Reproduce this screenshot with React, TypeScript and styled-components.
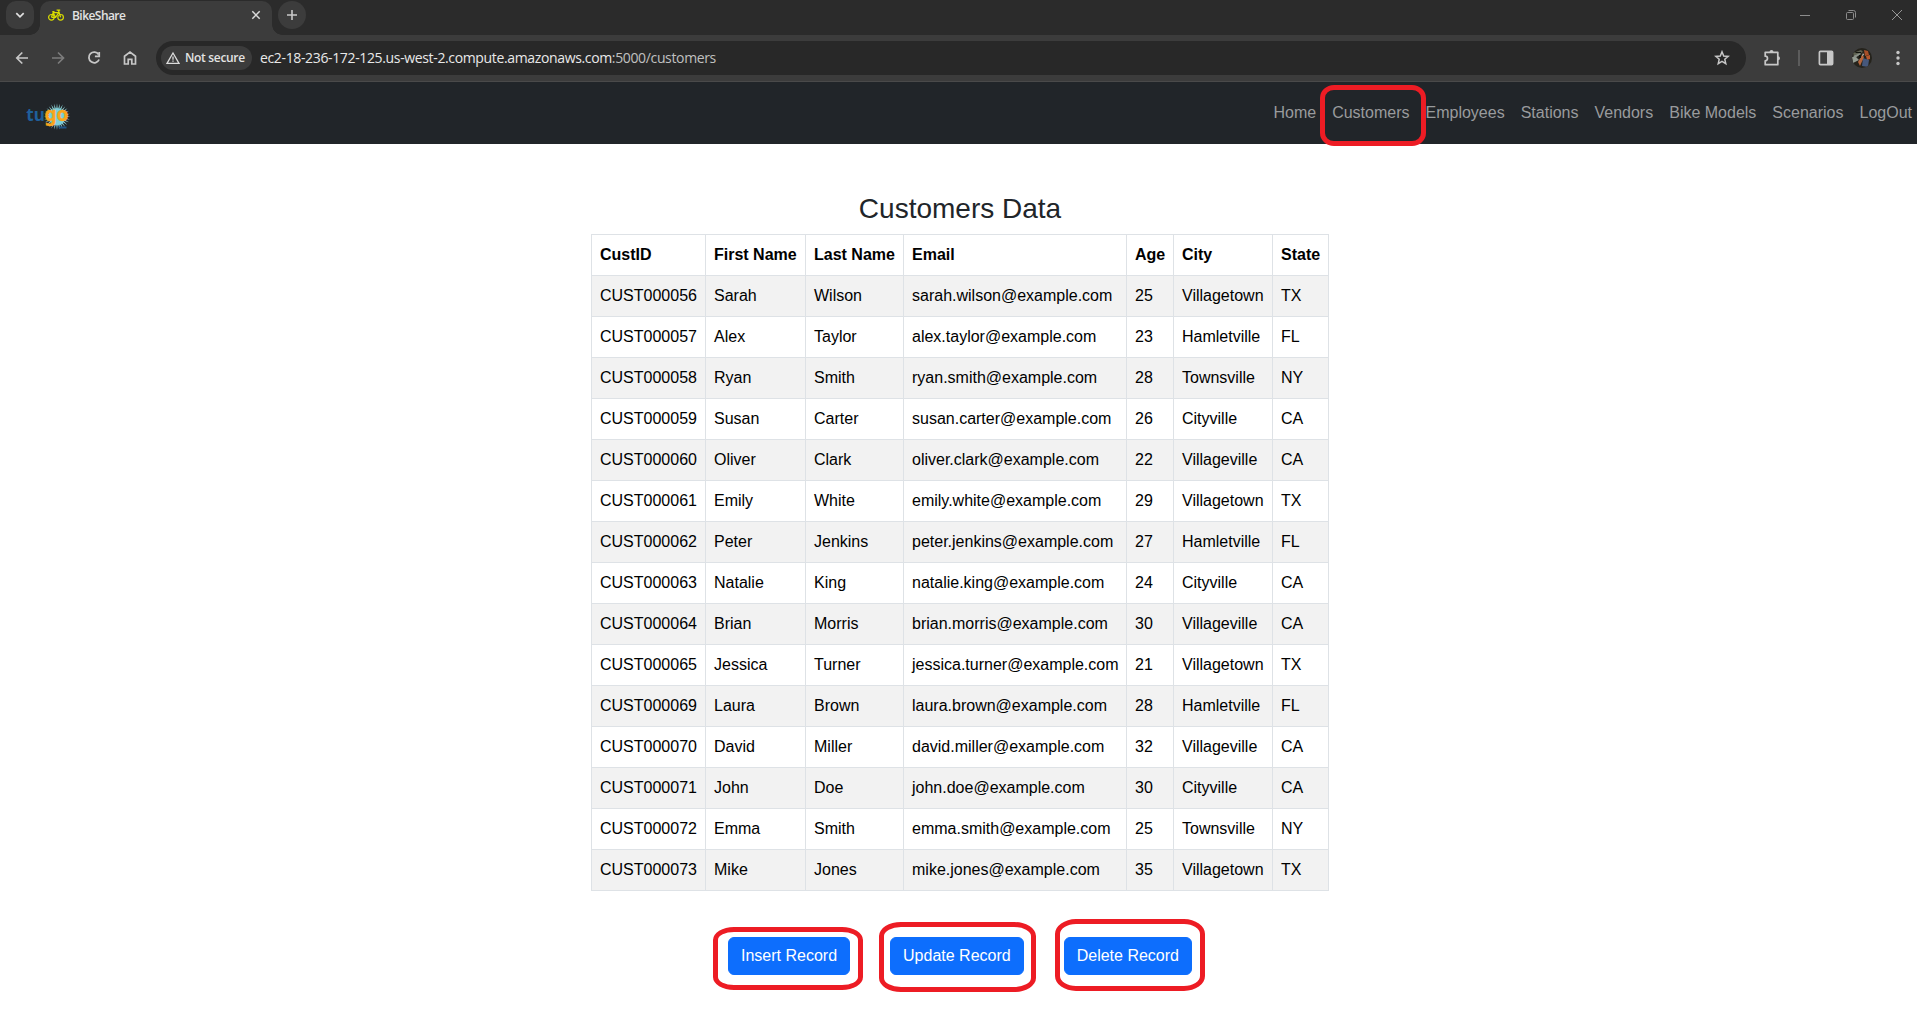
import React from 'react';
import styled, { createGlobalStyle } from 'styled-components';

const GlobalStyle = createGlobalStyle`
  *, *::before, *::after { box-sizing: border-box; }
  body {
    margin: 0;
    background: #fff;
    font-family: "Liberation Sans", Arial, sans-serif;
    font-size: 16px;
    line-height: 1.5;
    color: #212529;
    overflow: hidden;
  }
`;

const chromeFont = '"Open Sans", "Noto Sans", sans-serif';

const Page = styled.div`
  display: flex;
  flex-direction: column;
  height: 1025px;
`;

const TabStrip = styled.div`
  display: flex;
  align-items: flex-start;
  height: 35px;
  padding-left: 6px;
  background: #2b2b2b;
`;

const TabSearch = styled.div`
  display: flex;
  align-items: center;
  justify-content: center;
  width: 28px;
  height: 28px;
  margin-top: 1px;
  border-radius: 10px;
  background: #3c3c3c;
`;

const Tab = styled.div`
  position: relative;
  display: flex;
  align-items: center;
  width: 232px;
  height: 34px;
  margin: 1px 0 0 6px;
  padding: 0 10px 6px 8px;
  border-radius: 10px 10px 0 0;
  background: #3c3c3c;

  &::before, &::after {
    content: "";
    position: absolute;
    bottom: 0;
    width: 10px;
    height: 10px;
  }
  &::before {
    left: -10px;
    background: radial-gradient(circle at 0 0, transparent 9.5px, #3c3c3c 10px);
  }
  &::after {
    right: -10px;
    background: radial-gradient(circle at 100% 0, transparent 9.5px, #3c3c3c 10px);
  }
`;

const TabTitle = styled.span`
  flex: 1;
  margin: 2px 0 0 8px;
  font: 600 12px/16px ${chromeFont};
  letter-spacing: -0.55px;
  color: #e3e3e3;
`;

const NewTab = styled.div`
  display: flex;
  align-items: center;
  justify-content: center;
  width: 28px;
  height: 28px;
  margin: 1px 0 0 6px;
  border-radius: 50%;
  background: #3c3c3c;
`;

const WindowControls = styled.div`
  display: flex;
  margin: 0 -3px 0 auto;
`;

const WindowButton = styled.div`
  display: flex;
  align-items: center;
  justify-content: center;
  width: 46px;
  height: 30px;
`;

const Toolbar = styled.div`
  display: flex;
  align-items: center;
  height: 47px;
  padding: 0 7px 1px 10px;
  background: #3c3c3c;
  border-bottom: 1px solid #4a4a4a;
`;

const ToolIcons = styled.div`
  display: flex;
  gap: 12px;
  width: 146px;
  svg { flex: none; }
`;

const IconSlot = styled.div<{ $w?: number }>`
  display: flex;
  align-items: center;
  justify-content: center;
  flex: none;
  width: ${p => p.$w ?? 24}px;
  height: 24px;
`;

const AddressBar = styled.div`
  display: flex;
  align-items: center;
  flex: 1;
  height: 34px;
  padding: 0 12px 0 5px;
  border-radius: 17px;
  background: #282828;
`;

const SecurityChip = styled.div`
  display: flex;
  align-items: center;
  flex: none;
  gap: 5px;
  width: 91px;
  height: 24px;
  padding-left: 5px;
  border-radius: 12px;
  background: #3c3c3c;
  font: 600 12px/24px ${chromeFont};
  letter-spacing: -0.32px;
  color: #e3e3e3;
  white-space: nowrap;
`;

const Url = styled.span`
  flex: 1;
  margin-left: 8px;
  font: 400 14px/24px ${chromeFont};
  letter-spacing: -0.355px;
  color: #e8e8e8;
`;

const UrlPath = styled.span`
  color: #c0c0c0;
`;

const Actions = styled.div`
  display: flex;
  align-items: center;
  width: 164px;
  padding-left: 14px;
`;

const Divider = styled.div`
  width: 2px;
  height: 16px;
  margin: 0 14px;
  background: #5c5c5c;
`;

const NavBar = styled.nav`
  display: flex;
  align-items: flex-start;
  flex: none;
  height: 62px;
  padding: 0 5px 0 26px;
  background: #212529;
`;

const NavLinks = styled.div`
  display: flex;
  gap: 16px;
  margin: 19px 0 0 auto;
`;

const NavLink = styled.a`
  position: relative;
  color: #999b9d;
  line-height: 24px;
`;

const Brand = styled.div`
  display: flex;
  margin-top: 14px;
`;

type Inset = { t: number; r: number; b: number; l: number; rx: number; ry: number };

const Ring = styled.span<{ $i: Inset }>`
  position: absolute;
  z-index: 1;
  top: ${p => -p.$i.t}px;
  right: ${p => -p.$i.r}px;
  bottom: ${p => -p.$i.b}px;
  left: ${p => -p.$i.l}px;
  border: 5px solid #ed1c24;
  border-radius: ${p => p.$i.rx}px / ${p => p.$i.ry}px;
  pointer-events: none;
`;

const Main = styled.main`
  display: flex;
  flex-direction: column;
  align-items: center;
  padding: 48px 0 0 3px;
`;

const Title = styled.h3`
  margin: 0 0 8px;
  font-size: 28px;
  font-weight: 400;
  line-height: 34px;
`;

const Table = styled.table`
  width: 738px;
  table-layout: fixed;
  border-collapse: collapse;
  color: #000;
`;

const Cell = styled.td`
  height: 41px;
  padding: 8px;
  border: 1px solid #dee2e6;
  line-height: 24px;
  white-space: nowrap;
`;

const HeadCell = styled(Cell).attrs({ as: 'th' })`
  font-weight: 700;
  text-align: left;
`;

const Row = styled.tr`
  &:nth-child(odd) { background: #f2f2f2; }
`;

const ButtonRow = styled.div`
  display: flex;
  gap: 40px;
  margin-top: 46px;
`;

const RecordButton = styled.button`
  position: relative;
  width: auto;
  height: 38px;
  padding: 6px 12px;
  border: 1px solid #0d6efd;
  border-radius: 6px;
  background: #0d6efd;
  color: #fff;
  font: 400 16px/24px "Liberation Sans", Arial, sans-serif;
`;

const columns = [
  { name: 'CustID', width: 114 },
  { name: 'First Name', width: 100 },
  { name: 'Last Name', width: 98 },
  { name: 'Email', width: 223 },
  { name: 'Age', width: 47 },
  { name: 'City', width: 99 },
  { name: 'State', width: 56 },
];

const customers = [
  ['CUST000056', 'Sarah', 'Wilson', 'sarah.wilson@example.com', '25', 'Villagetown', 'TX'],
  ['CUST000057', 'Alex', 'Taylor', 'alex.taylor@example.com', '23', 'Hamletville', 'FL'],
  ['CUST000058', 'Ryan', 'Smith', 'ryan.smith@example.com', '28', 'Townsville', 'NY'],
  ['CUST000059', 'Susan', 'Carter', 'susan.carter@example.com', '26', 'Cityville', 'CA'],
  ['CUST000060', 'Oliver', 'Clark', 'oliver.clark@example.com', '22', 'Villageville', 'CA'],
  ['CUST000061', 'Emily', 'White', 'emily.white@example.com', '29', 'Villagetown', 'TX'],
  ['CUST000062', 'Peter', 'Jenkins', 'peter.jenkins@example.com', '27', 'Hamletville', 'FL'],
  ['CUST000063', 'Natalie', 'King', 'natalie.king@example.com', '24', 'Cityville', 'CA'],
  ['CUST000064', 'Brian', 'Morris', 'brian.morris@example.com', '30', 'Villageville', 'CA'],
  ['CUST000065', 'Jessica', 'Turner', 'jessica.turner@example.com', '21', 'Villagetown', 'TX'],
  ['CUST000069', 'Laura', 'Brown', 'laura.brown@example.com', '28', 'Hamletville', 'FL'],
  ['CUST000070', 'David', 'Miller', 'david.miller@example.com', '32', 'Villageville', 'CA'],
  ['CUST000071', 'John', 'Doe', 'john.doe@example.com', '30', 'Cityville', 'CA'],
  ['CUST000072', 'Emma', 'Smith', 'emma.smith@example.com', '25', 'Townsville', 'NY'],
  ['CUST000073', 'Mike', 'Jones', 'mike.jones@example.com', '35', 'Villagetown', 'TX'],
];

const links: { label: string; ring?: Inset }[] = [
  { label: 'Home' },
  { label: 'Customers', ring: { t: 16, r: 16, b: 21, l: 12, rx: 14, ry: 13 } },
  { label: 'Employees' },
  { label: 'Stations' },
  { label: 'Vendors' },
  { label: 'Bike Models' },
  { label: 'Scenarios' },
  { label: 'LogOut' },
];

const buttons: { label: string; ring: Inset }[] = [
  { label: 'Insert Record', ring: { t: 11, r: 14, b: 16, l: 16, rx: 21, ry: 13 } },
  { label: 'Update Record', ring: { t: 16, r: 13, b: 18, l: 12, rx: 22, ry: 14 } },
  { label: 'Delete Record', ring: { t: 19, r: 14, b: 17, l: 10, rx: 21, ry: 15 } },
];

const stroke = { fill: 'none', stroke: '#c7c7c7', strokeWidth: 1.7 };

const BikeIcon = () => (
  <svg width="16" height="16" viewBox="0 0 16 16" fill="none" stroke="#d9dc00" strokeWidth="1.2">
    <circle cx="3.4" cy="10.3" r="2.8" />
    <circle cx="12.6" cy="10.3" r="2.8" />
    <path d="M3.4 10.3 5.2 5.700h5.600L7.600 10.300H3.400M4.300 4.700h2.200M5.200 5.700l2.400 4.600M12.600 10.300 10.400 3.200H8.600M10.400 3.200h1.800" />
  </svg>
);

const rays = Array.from({ length: 28 }, (_, i) => {
  const a = (i * Math.PI * 2) / 28;
  const b = Math.PI / 36;
  const p = (r: number, t: number) => `${31 + r * Math.cos(t)} ${20.6 + r * Math.sin(t)}`;
  return `M${p(8, a - b)}L${p(13.3, a)}L${p(8, a + b)}Z`;
}).join('');

const TugoText = styled.text<{ $size: number }>`
  font-family: "Noto Sans", sans-serif;
  font-weight: 700;
  font-size: ${p => p.$size}px;
`;

const Logo = () => (
  <svg width="46" height="40" viewBox="0 0 46 40">
    <path d={rays} fill="#8fd6da" />
    <circle cx="31" cy="20.6" r="8.6" fill="#7ccfdb" />
    <path d="M32 30.500h8.500v2H33z" fill="#1f5489" />
    <TugoText $size={18.5} x="0.3" y="25" fill="#1f5f9a" textLength="18.500" lengthAdjust="spacingAndGlyphs">tu</TugoText>
    <TugoText $size={19.5} x="18.400" y="25" fill="#faa51a" stroke="#faa51a" strokeWidth="0.400" textLength="24" lengthAdjust="spacingAndGlyphs">go</TugoText>
  </svg>
);

const Avatar = () => (
  <svg width="20" height="20" viewBox="0 0 20 20">
    <clipPath id="avatar"><circle cx="10" cy="10" r="10" /></clipPath>
    <g clipPath="url(#avatar)">
      <path d="M0 0h20v20H0z" fill="#25231c" />
      <path d="M1 5 9 2l2 2-9 4z" fill="#5f6252" />
      <path d="M0 9h4l3 3-6 3z" fill="#939b91" />
      <path d="m1 8 7-3 1 1-6 4z" fill="#8b9289" />
      <path d="M12 2l4 1 1 4-4 1z" fill="#a84f28" />
      <path d="m14 8 4-1 0 4-3 1z" fill="#b5562d" />
      <path d="m11 10 6 2-1 7-6-1z" fill="#46587c" />
      <path d="m6 14 4-7 2 2-4 9z" fill="#b5653c" />
      <path d="M3 4h6v1H4zM7 7h2v3H7z" fill="#11150f" />
      <path d="m11 5 1 2-2 1z" fill="#d8d3c6" />
    </g>
  </svg>
);

export default function App() {
  return (
    <>
      <GlobalStyle />
      <Page>
        <TabStrip>
          <TabSearch>
            <svg width="10" height="8" viewBox="0 0 10 8" {...stroke} stroke="#e0e0e0"><path d="m1.300 2.200 3.700 3.600 3.700-3.600" /></svg>
          </TabSearch>
          <Tab>
            <BikeIcon />
            <TabTitle>BikeShare</TabTitle>
            <svg width="12" height="12" viewBox="0 0 12 12" {...stroke} strokeWidth={1.5} stroke="#dadada"><path d="m2.300 2.300 7.400 7.400m0-7.400-7.400 7.400" /></svg>
          </Tab>
          <NewTab>
            <svg width="12" height="12" viewBox="0 0 12 12" {...stroke} strokeWidth={1.6}><path d="M6 1v10M1 6h10" /></svg>
          </NewTab>
          <WindowControls>
            <WindowButton>
              <svg width="10" height="10" viewBox="0 0 10 10" fill="none" stroke="#8c8c8c"><path d="M0 5.500h10" /></svg>
            </WindowButton>
            <WindowButton>
              <svg width="10" height="10" viewBox="0 0 10 10" fill="none" stroke="#8c8c8c"><rect x=".5" y="2.500" width="7" height="7" rx="1" /><path d="M2.500.5h5a2 2 0 0 1 2 2v5" /></svg>
            </WindowButton>
            <WindowButton>
              <svg width="10" height="10" viewBox="0 0 10 10" fill="none" stroke="#969696"><path d="m0 0 10 10M10 0 0 10" /></svg>
            </WindowButton>
          </WindowControls>
        </TabStrip>
        <Toolbar>
          <ToolIcons>
            <IconSlot><svg width="16" height="16" viewBox="0 0 16 16" {...stroke}><path d="M14 8H3.200M8.300 2.500 2.800 8l5.500 5.500" /></svg></IconSlot>
            <IconSlot><svg width="16" height="16" viewBox="0 0 16 16" {...stroke} stroke="#7c7c7c"><path d="M2 8h11M8 2.500 13.500 8 8 13.500" /></svg></IconSlot>
            <IconSlot>
              <svg width="16" height="16" viewBox="0 0 16 16" {...stroke} strokeWidth={1.8}>
                <path d="M12.600 4.500A5.300 5.300 0 1 0 13.100 9.500" />
                <path d="M13.200 2v4.300H8.900" />
              </svg>
            </IconSlot>
            <IconSlot><svg width="16" height="16" viewBox="0 0 16 16" {...stroke}><path d="M2.500 14V6.200L8 2l5.500 4.200V14H9.800V9.300H6.200V14z" /></svg></IconSlot>
          </ToolIcons>
          <AddressBar>
            <SecurityChip>
              <svg width="14" height="14" viewBox="0 0 14 14" fill="none" stroke="#dcdcdc" strokeWidth="1.300"><path d="M7 2 13 12.300H1zM7 5.500v3.200M7 9.500v1.300" /></svg>
              Not secure
            </SecurityChip>
            <Url>ec2-18-236-172-125.us-west-2.compute.amazonaws.com<UrlPath>:5000/customers</UrlPath></Url>
            <IconSlot>
              <svg width="16" height="16" viewBox="0 0 16 16" {...stroke} strokeWidth={1.5}><path d="m8 1.800 1.700 4.200 4.500.4-3.400 2.900 1 4.400L8 11.400l-3.800 2.300 1-4.400L1.800 6.400l4.500-.4z" /></svg>
            </IconSlot>
          </AddressBar>
          <Actions>
            <IconSlot>
              <svg width="18" height="18" viewBox="0 0 18 18" {...stroke} strokeWidth={1.700}>
                <path d="M2.200 3.300h12.600v12.400H2.200v-3.900a2.300 2.300 0 0 0 0-4.600z" strokeLinejoin="round" />
                <path d="M6.500 3a2 2 0 0 1 4 0zM15 7.300a2 2 0 0 1 0 4z" fill="#c7c7c7" stroke="none" />
              </svg>
            </IconSlot>
            <Divider />
            <IconSlot>
              <svg width="16" height="16" viewBox="0 0 16 16" {...stroke}><rect x="1.400" y="1.400" width="13.200" height="13.200" rx="1" /><path d="M9 1h6v14H9z" fill="#c7c7c7" stroke="none" /></svg>
            </IconSlot>
            <IconSlot $w={48}><Avatar /></IconSlot>
            <IconSlot>
              <svg width="4" height="16" viewBox="0 0 4 16" fill="#c7c7c7"><circle cx="2" cy="2.500" r="1.700" /><circle cx="2" cy="8" r="1.700" /><circle cx="2" cy="13.500" r="1.700" /></svg>
            </IconSlot>
          </Actions>
        </Toolbar>
        <NavBar>
          <Brand><Logo /></Brand>
          <NavLinks>
            {links.map(link => (
              <NavLink key={link.label}>
                {link.label}
                {link.ring && <Ring $i={link.ring} />}
              </NavLink>
            ))}
          </NavLinks>
        </NavBar>
        <Main>
          <Title>Customers Data</Title>
          <Table>
            <colgroup>
              {columns.map(c => <col key={c.name} width={c.width} />)}
            </colgroup>
            <thead>
              <tr>{columns.map(c => <HeadCell key={c.name}>{c.name}</HeadCell>)}</tr>
            </thead>
            <tbody>
              {customers.map(row => (
                <Row key={row[0]}>
                  {row.map((value, i) => <Cell key={columns[i].name}>{value}</Cell>)}
                </Row>
              ))}
            </tbody>
          </Table>
          <ButtonRow>
            {buttons.map(b => (
              <RecordButton key={b.label}>
                {b.label}
                <Ring $i={b.ring} />
              </RecordButton>
            ))}
          </ButtonRow>
        </Main>
      </Page>
    </>
  );
}
